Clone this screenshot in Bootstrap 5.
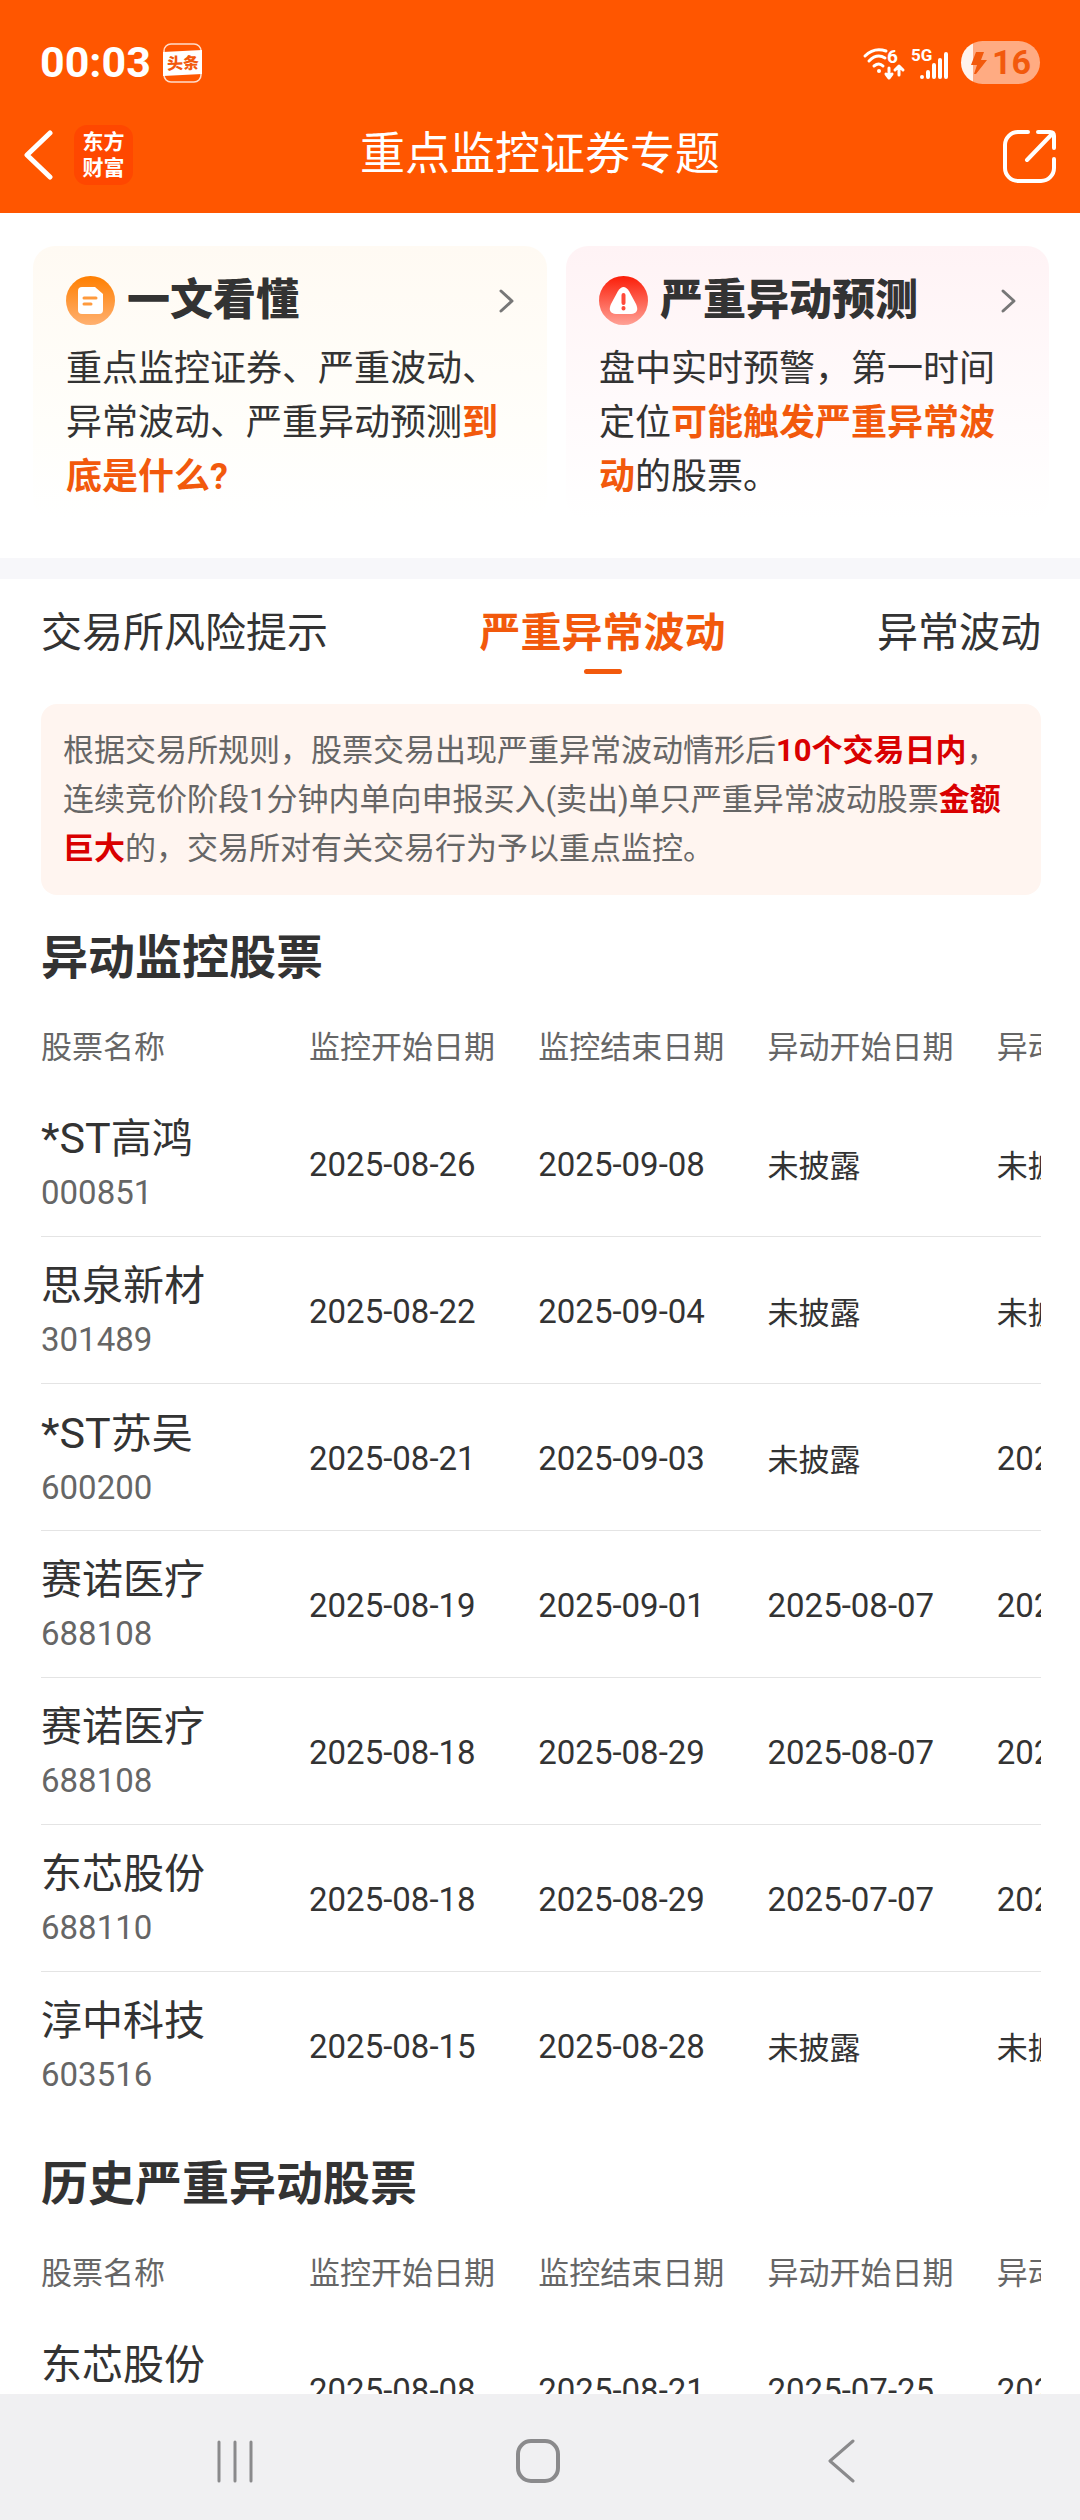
<!DOCTYPE html>
<html lang="zh-CN">
<head>
<meta charset="utf-8">
<meta name="viewport" content="width=device-width, initial-scale=1">
<title>重点监控证券专题</title>
<link href="https://cdn.jsdelivr.net/npm/bootstrap@5.3.0/dist/css/bootstrap.min.css" rel="stylesheet">
<style>
  :root { --brand: #ff5600; --accent: #f2590c; --ink: #333; --muted: #666; }
  body { font-family: Roboto, "Noto Sans CJK SC", sans-serif; color: var(--ink); background: #fff; }
  button { border: 0; background: none; padding: 0; color: inherit; }
  svg { display: block; flex: none; }
  .app-head { background: var(--brand); color: #fff; padding: 41px 24px 28px; }
  .status-row { height: 43px; padding: 0 16px; margin-bottom: 40px; gap: 12px; }
  .clock { font-size: 43px; line-height: 43px; font-weight: 700; }
  .signals { gap: 5px; }
  .battery { width: 79px; height: 43px; border-radius: 22px; background: linear-gradient(90deg, #fff3ec 12px, #ffab82 12px); color: var(--accent); font-size: 34px; line-height: 43px; font-weight: 700; padding-left: 10px; gap: 5px; }
  .title-row { height: 61px; }
  .head-side { flex: 1 1 0; gap: 20px; }
  .page-title { font-size: 45px; line-height: 60px; font-weight: 400; }
  .app-logo { width: 59px; height: 60px; border-radius: 13px; background: #ff4700; font-size: 21px; line-height: 26px; font-weight: 700; }
  .promos { display: grid; grid-template-columns: 514fr 483fr; gap: 19px; padding: 33px 31px 38px 33px; border-bottom: 21px solid #f7f7fa; }
  .promo { border-radius: 22px; padding: 30px 31px 30px 33px; height: 274px; color: var(--ink); text-decoration: none; }
  .promo-warm { background: linear-gradient(#fffaf3, #fffefa 65%, #fff); }
  .promo-rose { background: linear-gradient(#fff3f5, #fffbfc 65%, #fff); }
  .promo-title { font-size: 43px; line-height: 49px; font-weight: 900; }
  .promo-text { font-size: 36px; line-height: 54px; margin: 17px 0 0; }
  .promo-text b { color: var(--accent); }
  .sheet { padding: 0 39px 0 41px; }
  .tab-row { height: 125px; padding-top: 24px; }
  .tab-row button { font-size: 41px; line-height: 60px; }
  .tab-row .active { color: var(--accent); font-weight: 700; }
  .tab-row .active::after { content: ""; display: block; width: 38px; height: 5px; border-radius: 3px; background: var(--accent); margin: 6px auto 0; }
  .notice { background: #fff5f0; color: var(--muted); border-radius: 16px; padding: 22px; font-size: 31px; line-height: 49px; }
  .notice b { color: #d90000; }
  .block-title { font-size: 47px; line-height: 70px; font-weight: 700; padding: 28px 0 10px; margin: 0; }
  .scroller { overflow-x: auto; scrollbar-width: none; padding-bottom: 3px; }
  .scroller::-webkit-scrollbar { display: none; }
  .stocks { table-layout: fixed; width: 1185px; border-collapse: collapse; font-size: 31px; }
  .stocks th:first-child { width: 268px; }
  .stocks th, .stocks td { padding: 0; font-weight: 400; vertical-align: middle; white-space: nowrap; }
  .stocks thead th { height: 86px; padding-top: 3px; color: var(--muted); line-height: 46px; }
  .stocks tbody tr { height: 147px; border-bottom: 1px solid #e4e4e4; }
  .stocks tbody tr:last-child { border-bottom: 0; }
  .stocks td { padding-top: 9px; }
  .stocks td:first-child { padding-top: 2px; }
  .stocks td.day { padding-top: 5px; font-size: 33px; line-height: 48px; }
  .stock-name { font-size: 41px; line-height: 58px; }
  .stock-name span { font-size: 43px; }
  .stock-code { font-size: 33px; line-height: 49px; color: var(--muted); }
  .sys-nav { height: 126px; background: #f0f0f2; padding: 7px 88px 0 84px; }
</style>
<script src="https://cdn.jsdelivr.net/npm/bootstrap@5.3.0/dist/js/bootstrap.bundle.min.js"></script>
</head>
<body class="vh-100 d-flex flex-column overflow-hidden">

<header class="app-head flex-shrink-0">
  <div class="status-row d-flex align-items-center">
    <span class="clock">00:03</span>
    <svg width="39" height="40" viewBox="0 0 39 40">
      <rect x="1" y="1" width="37" height="38" rx="7" fill="none" stroke="#fff" stroke-opacity=".8" stroke-width="1.5"/>
      <path d="M0 9L39 7V31L0 33Z" fill="#fff"/>
      <text x="4" y="26" font-size="16" font-weight="900" fill="#f2590c" transform="rotate(-2 19 20)">头条</text>
    </svg>
    <div class="signals d-flex ms-auto">
      <svg width="44" height="40" viewBox="0 0 44 40" fill="none" stroke="#fff" stroke-width="3" stroke-linecap="round" stroke-linejoin="round">
        <path d="M3 13Q12 4 24 8M7 18Q15 10 23 15M12 23Q17 19 21 23" />
        <circle cx="17" cy="28" r="2" fill="#fff" stroke="none"/>
        <path d="M27 25v9M24 31l3 4 3-4M37 32v-9M33 27l4-4 4 4"/>
        <text x="25" y="20" font-size="19" font-weight="700" fill="#fff" stroke="none">6</text>
      </svg>
      <svg width="38" height="40" viewBox="0 0 38 40" fill="none" stroke="#fff" stroke-width="4" stroke-linecap="round">
        <path d="M11 34v0M17 34v-5M23 34V22M29 34V17M35 34V11"/>
        <text x="0" y="18" font-size="17" font-weight="700" fill="#fff" stroke="none">5G</text>
      </svg>
    </div>
    <div class="battery d-flex align-items-center">
      <svg width="16" height="22" viewBox="0 0 16 22"><path d="M5 0H13L10 8H16L5 22H3L6 13H0Z" fill="#f2590c"/></svg>
      <span>16</span>
    </div>
  </div>
  <div class="title-row d-flex align-items-center">
    <div class="head-side d-flex align-items-center">
      <button type="button" aria-label="返回"><svg width="30" height="52" viewBox="0 0 30 52"><path d="M26 4L3 26L26 48" fill="none" stroke="#fff" stroke-width="5" stroke-linecap="round" stroke-linejoin="round"/></svg></button>
      <a href="#" class="app-logo d-flex align-items-center text-center text-white text-decoration-none justify-content-center">东方<br>财富</a>
    </div>
    <h1 class="page-title m-0">重点监控证券专题</h1>
    <div class="head-side d-flex justify-content-end">
      <button type="button" aria-label="分享"><svg width="54" height="62" viewBox="2 0 54 62" fill="none" stroke="#fff" stroke-width="4" stroke-linecap="round" stroke-linejoin="round"><path d="M28 8H18a13 13 0 0 0-13 13v23a13 13 0 0 0 13 13h23a13 13 0 0 0 13-13V35M38 8h12q4 0 4 4v12M27 36L53 9"/></svg></button>
    </div>
  </div>
</header>

<main class="flex-fill overflow-hidden">
  <section class="promos">
    <a href="#" class="promo promo-warm">
      <div class="d-flex align-items-center">
        <svg width="49" height="49" viewBox="0 0 49 49">
          <defs><linearGradient id="gw" x2="0" y2="1"><stop stop-color="#ff7f00"/><stop offset="1" stop-color="#ffb070"/></linearGradient></defs>
          <circle cx="24.500" cy="24.500" r="24.500" fill="url(#gw)"/>
          <path d="M16 11H29L37 18V34Q37 38 33 38H16Q12 38 12 34V15Q12 11 16 11Z" fill="#fff"/>
          <path d="M18 22H30M18 28H25" stroke="#ff9a3d" stroke-width="3" stroke-linecap="round"/>
        </svg>
        <span class="promo-title ms-2 ps-1">一文看懂</span>
        <svg class="ms-auto" width="18" height="26" viewBox="0 0 18 26"><path d="M3 3L14 13L3 23" fill="none" stroke="#777" stroke-width="3" stroke-linecap="round" stroke-linejoin="round"/></svg>
      </div>
      <p class="promo-text">重点监控证券、严重波动、异常波动、严重异动预测<b>到底是什么?</b></p>
    </a>
    <a href="#" class="promo promo-rose">
      <div class="d-flex align-items-center">
        <svg width="49" height="49" viewBox="0 0 49 49">
          <defs><linearGradient id="gr" x2="0" y2="1"><stop stop-color="#fb1d08"/><stop offset="1" stop-color="#ffa196"/></linearGradient></defs>
          <circle cx="24.500" cy="24.500" r="24.500" fill="url(#gr)"/>
          <path d="M19 15Q24.500 7 30 15L37 28Q41 37 32 38H17Q8 37 12 28Z" fill="#fff"/>
          <path d="M24.500 19V27M24.500 32V32.500" stroke="#ff4a3a" stroke-width="4" stroke-linecap="round"/>
        </svg>
        <span class="promo-title ms-2 ps-1">严重异动预测</span>
        <svg class="ms-auto" width="18" height="26" viewBox="0 0 18 26"><path d="M3 3L14 13L3 23" fill="none" stroke="#777" stroke-width="3" stroke-linecap="round" stroke-linejoin="round"/></svg>
      </div>
      <p class="promo-text">盘中实时预警，第一时间定位<b>可能触发严重异常波动</b>的股票。</p>
    </a>
  </section>

  <section class="sheet">
    <nav class="tab-row d-flex justify-content-between align-items-start">
      <button type="button">交易所风险提示</button>
      <button type="button" class="active" aria-current="page">严重异常波动</button>
      <button type="button">异常波动</button>
    </nav>
    <div class="notice">根据交易所规则，股票交易出现严重异常波动情形后<b>10个交易日内</b>，连续竞价阶段1分钟内单向申报买入(卖出)单只严重异常波动股票<b>金额巨大</b>的，交易所对有关交易行为予以重点监控。</div>

    <h2 class="block-title">异动监控股票</h2>
    <div class="scroller">
      <table class="stocks">
        <thead><tr><th scope="col">股票名称</th><th scope="col">监控开始日期</th><th scope="col">监控结束日期</th><th scope="col">异动开始日期</th><th scope="col">异动结束日期</th></tr></thead>
        <tbody>
          <tr><td><div class="stock-name"><span>*ST</span>高鸿</div><div class="stock-code">000851</div></td><td class="day">2025-08-26</td><td class="day">2025-09-08</td><td>未披露</td><td>未披露</td></tr>
          <tr><td><div class="stock-name">思泉新材</div><div class="stock-code">301489</div></td><td class="day">2025-08-22</td><td class="day">2025-09-04</td><td>未披露</td><td>未披露</td></tr>
          <tr><td><div class="stock-name"><span>*ST</span>苏吴</div><div class="stock-code">600200</div></td><td class="day">2025-08-21</td><td class="day">2025-09-03</td><td>未披露</td><td class="day">2025</td></tr>
          <tr><td><div class="stock-name">赛诺医疗</div><div class="stock-code">688108</div></td><td class="day">2025-08-19</td><td class="day">2025-09-01</td><td class="day">2025-08-07</td><td class="day">2025</td></tr>
          <tr><td><div class="stock-name">赛诺医疗</div><div class="stock-code">688108</div></td><td class="day">2025-08-18</td><td class="day">2025-08-29</td><td class="day">2025-08-07</td><td class="day">2025</td></tr>
          <tr><td><div class="stock-name">东芯股份</div><div class="stock-code">688110</div></td><td class="day">2025-08-18</td><td class="day">2025-08-29</td><td class="day">2025-07-07</td><td class="day">2025</td></tr>
          <tr><td><div class="stock-name">淳中科技</div><div class="stock-code">603516</div></td><td class="day">2025-08-15</td><td class="day">2025-08-28</td><td>未披露</td><td>未披露</td></tr>
        </tbody>
      </table>
    </div>

    <h2 class="block-title">历史严重异动股票</h2>
    <div class="scroller">
      <table class="stocks">
        <thead><tr><th scope="col">股票名称</th><th scope="col">监控开始日期</th><th scope="col">监控结束日期</th><th scope="col">异动开始日期</th><th scope="col">异动结束日期</th></tr></thead>
        <tbody>
          <tr><td><div class="stock-name">东芯股份</div><div class="stock-code">688110</div></td><td class="day">2025-08-08</td><td class="day">2025-08-21</td><td class="day">2025-07-25</td><td class="day">2025</td></tr>
        </tbody>
      </table>
    </div>
  </section>
</main>

<footer class="sys-nav d-flex align-items-center flex-shrink-0">
  <button type="button" class="flex-fill d-flex justify-content-center" aria-label="最近任务"><svg width="42" height="44" viewBox="0 0 42 44"><path d="M5 3V42M21 3V42M37 3V42" stroke="#8a8a8c" stroke-width="3" stroke-linecap="round"/></svg></button>
  <button type="button" class="flex-fill d-flex justify-content-center" aria-label="主屏幕"><svg width="44" height="44" viewBox="0 0 44 44"><rect x="2" y="2" width="40" height="40" rx="13" fill="none" stroke="#8a8a8c" stroke-width="4"/></svg></button>
  <button type="button" class="flex-fill d-flex justify-content-center" aria-label="返回"><svg width="42" height="44" viewBox="0 0 42 44"><path d="M33 2L10 22L33 42" fill="none" stroke="#8a8a8c" stroke-width="3" stroke-linecap="round" stroke-linejoin="round"/></svg></button>
</footer>
</body>
</html>
